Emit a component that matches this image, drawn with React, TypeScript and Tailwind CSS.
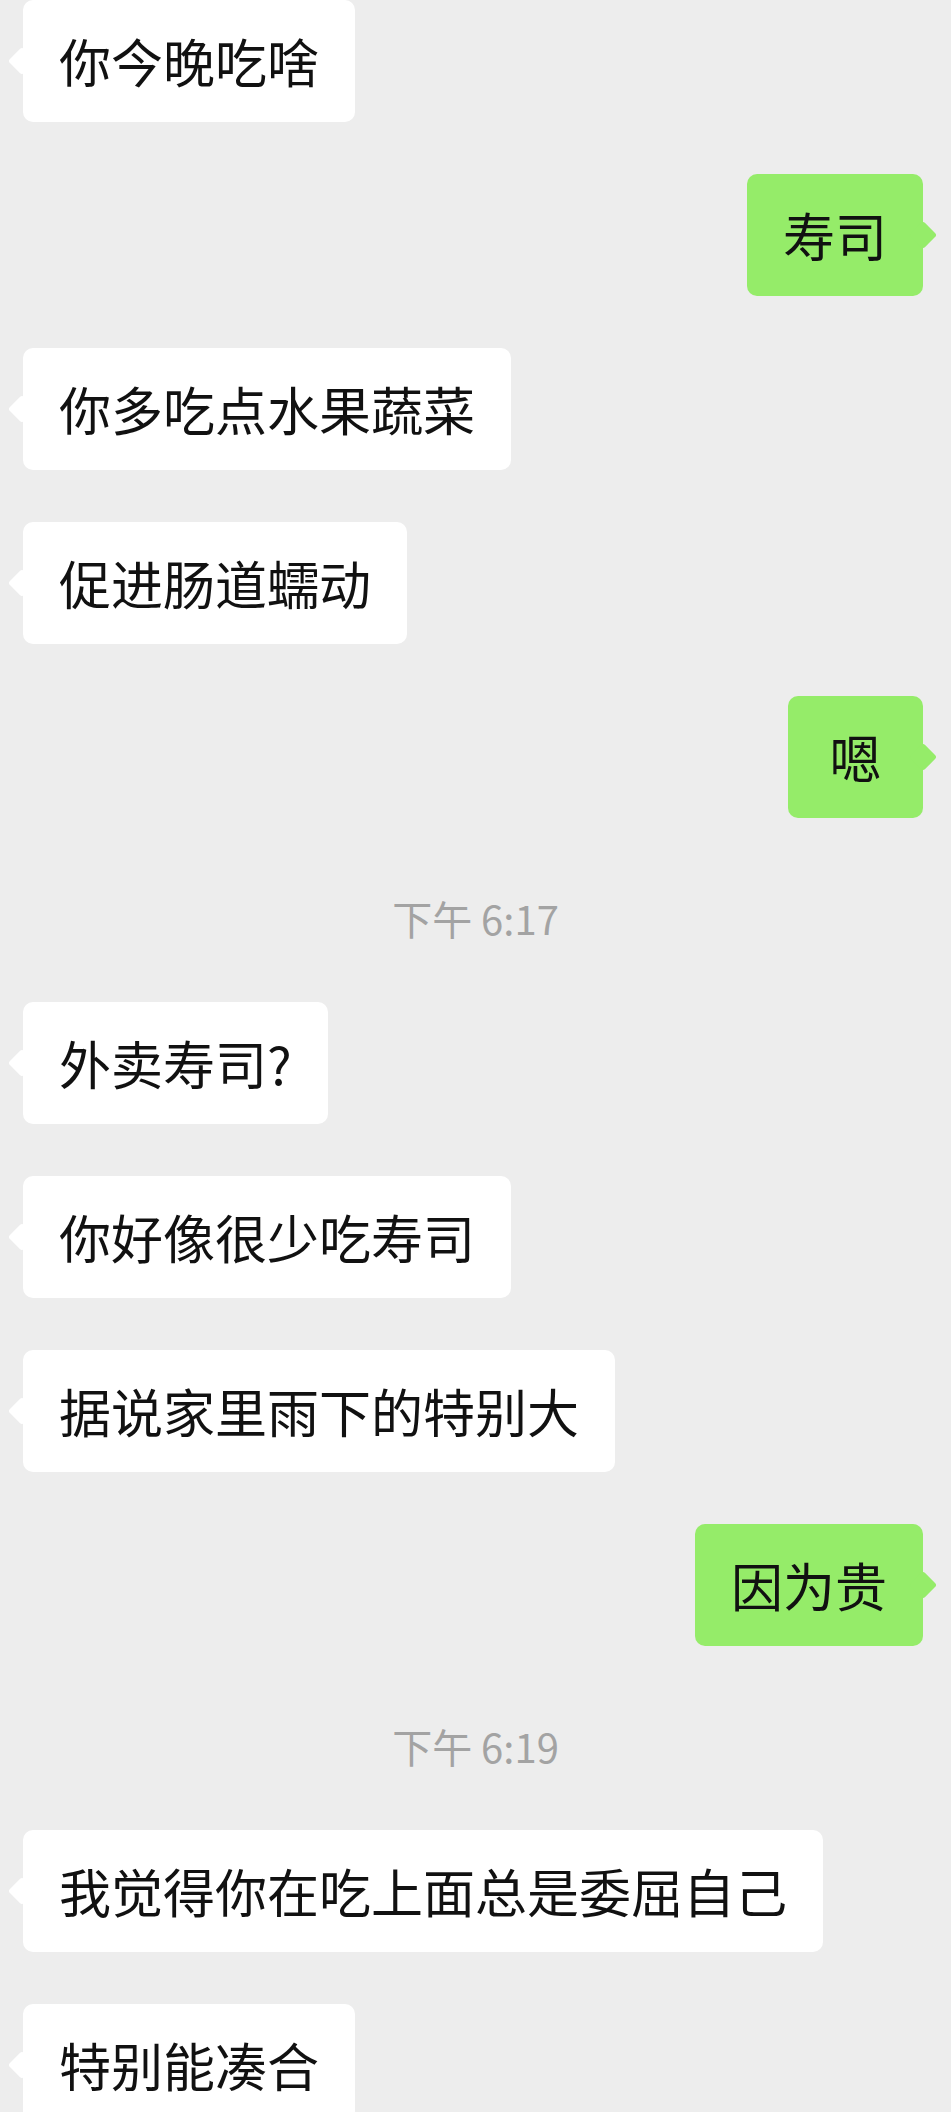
import React from "react";

type Msg =
  | { kind: "in" | "out"; text: string; minW?: boolean }
  | { kind: "time"; text: string };

const messages: Msg[] = [
  { kind: "in", text: "你今晚吃啥" },
  { kind: "out", text: "寿司" },
  { kind: "in", text: "你多吃点水果蔬菜" },
  { kind: "in", text: "促进肠道蠕动" },
  { kind: "out", text: "嗯", minW: true },
  { kind: "time", text: "下午 6:17" },
  { kind: "in", text: "外卖寿司?" },
  { kind: "in", text: "你好像很少吃寿司" },
  { kind: "in", text: "据说家里雨下的特别大" },
  { kind: "out", text: "因为贵" },
  { kind: "time", text: "下午 6:19" },
  { kind: "in", text: "我觉得你在吃上面总是委屈自己" },
  { kind: "in", text: "特别能凑合" },
];

const Bubble: React.FC<{ msg: Extract<Msg, { kind: "in" | "out" }> }> = ({ msg }) => {
  const isOut = msg.kind === "out";
  return (
    <div
      className={`relative rounded-[10px] px-[36px] py-[25px] text-[52px] leading-[72px] text-[#111111] whitespace-nowrap ${
        isOut ? "self-end mr-[28px] bg-[#95ec69]" : "self-start ml-[23px] bg-white"
      } ${msg.minW ? "min-w-[135px] text-center" : ""}`}
    >
      <span
        className={`absolute top-[51px] w-[20px] h-[20px] rotate-45 rounded-[3px] ${
          isOut ? "-right-[10px] bg-[#95ec69]" : "-left-[11px] bg-white"
        }`}
      />
      <span className="relative">{msg.text}</span>
    </div>
  );
};

export default function App() {
  return (
    <div
      className="w-[951px] h-[2112px] overflow-hidden bg-[#ededed] flex flex-col gap-[52px]"
      style={{ fontFamily: '"Noto Sans CJK SC", "Noto Sans", sans-serif' }}
    >
      {messages.map((m, i) =>
        m.kind === "time" ? (
          <div
            key={i}
            className="self-center mt-[28px] mb-[12px] text-[40px] leading-[40px] text-[#a3a3a3] whitespace-nowrap"
          >
            {m.text}
          </div>
        ) : (
          <Bubble key={i} msg={m} />
        )
      )}
    </div>
  );
}
